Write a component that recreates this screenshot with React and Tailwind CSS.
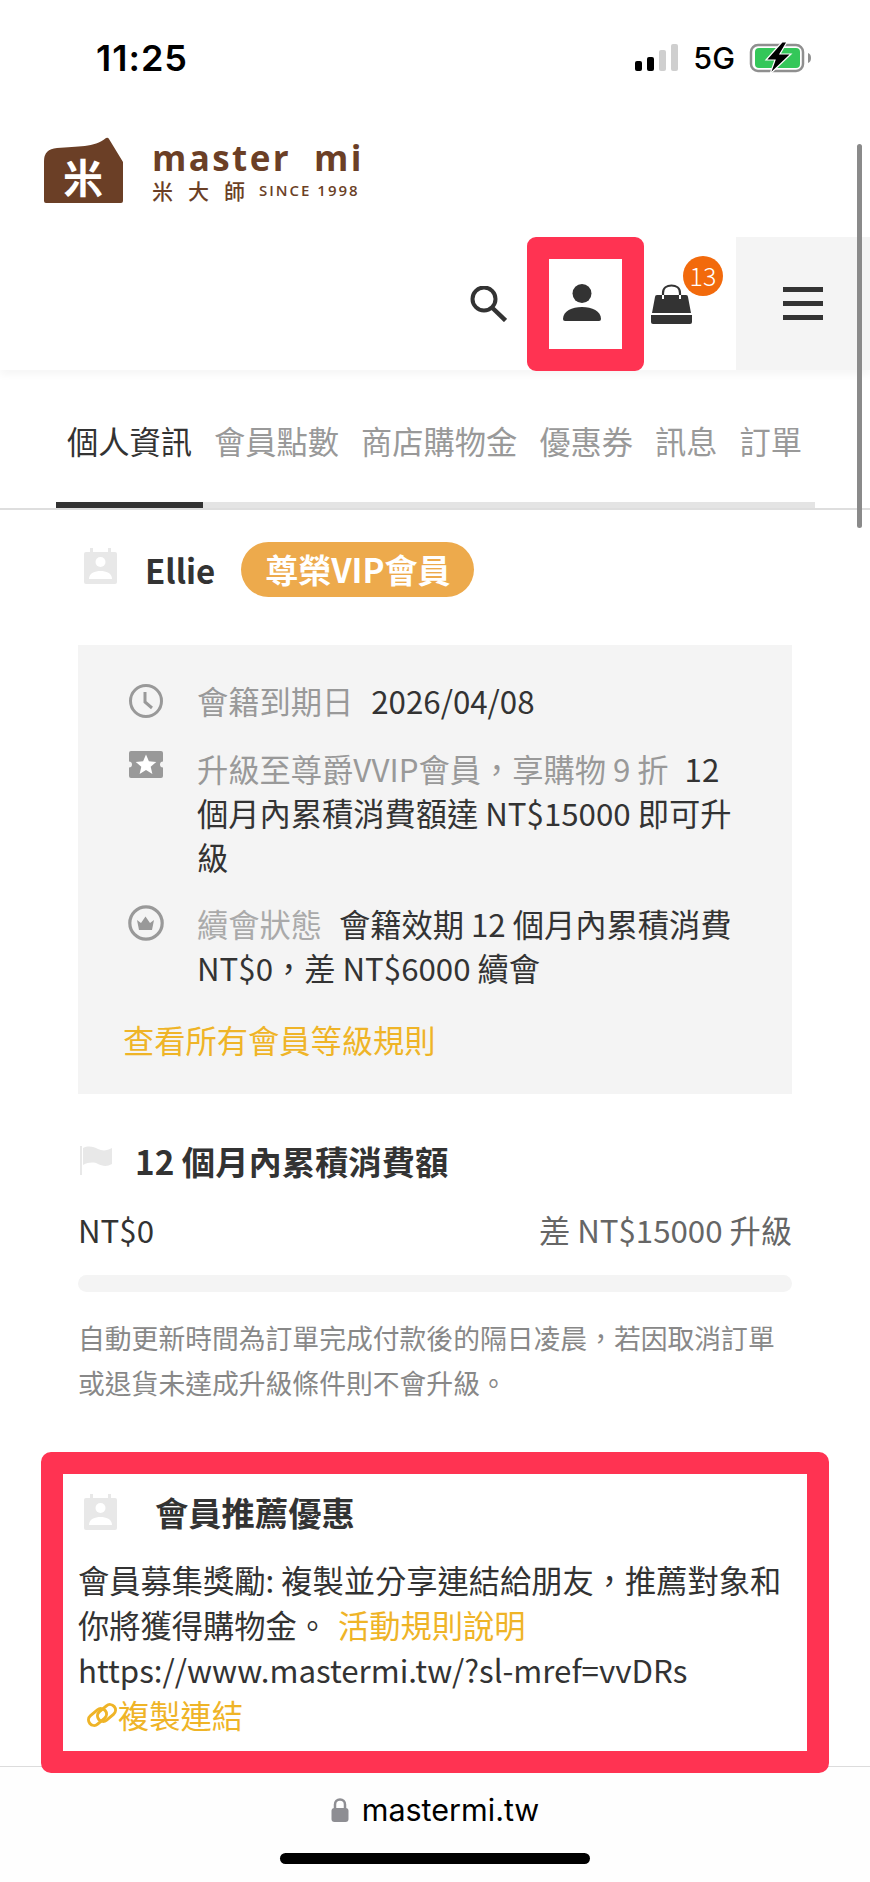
import React from "react";

const cjk = "font-['Noto_Sans_CJK_TC','Noto_Sans',sans-serif]";

function BadgeIcon({ className }) {
  return (
    <svg width="35" height="38" viewBox="0 0 35 38" className={className}>
      <path d="M7 1h3v5H7zM25 1h3v5h-3z" fill="#e8e8e8" />
      <rect x="1" y="5" width="33" height="32" rx="2" fill="#e8e8e8" />
      <circle cx="17.5" cy="15" r="5" fill="#fff" />
      <path d="M6 32c0-6 6-8 11.500-8S29 26 29 32z" fill="#fff" />
    </svg>
  );
}

function Row({ icon, children }) {
  return (
    <div className="flex pl-[50px]">
      <div className="w-[36px] shrink-0 pt-[5px]">{icon}</div>
      <div className="ml-[33px] w-[560px] text-[31.250px] leading-[44px] text-[#333]">{children}</div>
    </div>
  );
}

export default function App() {
  return (
    <div className={`relative h-[1882px] w-[870px] overflow-hidden bg-white ${cjk}`}>
      {/* status bar */}
      <div className="flex h-[117px] items-start justify-between pl-[96px]">
        <div className="mt-[38px] font-['Inter',sans-serif] text-[36px] font-semibold leading-[40px] tracking-[1px] text-black">11:25</div>
        <div className="mr-[57px] mt-[43px] flex items-start">
          <div className="mt-[1px] flex h-[27px] items-end gap-[5px]">
            <div className="h-[10px] w-[7px] rounded-[2px] bg-black" />
            <div className="h-[14px] w-[7px] rounded-[2px] bg-black" />
            <div className="h-[21px] w-[7px] rounded-[2px] bg-[#cfcfcf]" />
            <div className="h-[27px] w-[7px] rounded-[2px] bg-[#cfcfcf]" />
          </div>
          <div className="ml-[15px] font-['Inter',sans-serif] text-[30.500px] font-medium leading-[30px] text-black">5G</div>
          <svg width="64" height="32" viewBox="0 0 64 32" className="ml-[14px] -mt-[1px]">
            <rect x="2" y="3" width="52" height="26" rx="7" fill="none" stroke="#8f8f8f" strokeWidth="2.500" />
            <rect x="6" y="6" width="45" height="20" rx="4" fill="#34c759" />
            <path d="M59 11c2 .5 3 2.500 3 5s-1 4.500-3 5z" fill="#8f8f8f" />
            <path d="M33 0 L17 18 H26 L21 32 L42 12 H31 L38 0 Z" fill="#000" stroke="#fff" strokeWidth="1.200" />
          </svg>
        </div>
      </div>

      {/* logo */}
      <div className="flex h-[120px] items-start pl-[44px] pt-[20px] text-[#6b3f26]">
        <div className="relative h-[67px] w-[80px]">
          <svg width="80" height="67" viewBox="0 0 80 67">
            <path d="M0 64V24Q0 12 13 11C34 9 50 11 62 1Q64 0 65 2L79 25V64Q79 66 77 66H2Q0 66 0 64Z" fill="#6b3f26" />
          </svg>
          <span className="absolute left-[19px] top-[19px] text-[40px] font-bold leading-[40px] text-white">米</span>
        </div>
        <div className="ml-[28px]">
          <div className="mt-[6px] whitespace-nowrap font-['Open_Sans',sans-serif] text-[35px] font-bold leading-[30px] tracking-[2.400px]">master&nbsp;&nbsp;mi</div>
          <div className="mt-[4px] flex items-center whitespace-nowrap">
            <span className="text-[21px] font-medium leading-[26px] tracking-[15px]">米大師</span>
            <span className="-ml-[1px] font-['Open_Sans',sans-serif] text-[15px] font-semibold leading-[26px] tracking-[2px]">SINCE 1998</span>
          </div>
        </div>
      </div>

      {/* header icons */}
      <div className="relative flex h-[133px] items-center justify-end shadow-[0_5px_8px_rgba(0,0,0,0.04)]">
        <svg width="37" height="36" viewBox="0 0 37 36" className="mr-[20px]">
          <circle cx="14" cy="13" r="11.500" fill="none" stroke="#333" strokeWidth="4" />
          <path d="M22.500 22L35.500 34.500" stroke="#333" strokeWidth="4.500" />
        </svg>
        <div className="flex h-[134px] w-[117px] items-center justify-center rounded-[9px] border-[22px] border-[#ff3352] bg-white pb-[3px] pr-[7px]">
          <svg width="38" height="37" viewBox="0 0 38 37" className="shrink-0">
            <circle cx="19" cy="9.500" r="9.500" fill="#333" />
            <path d="M0 35C0 27 9 23 19 23S38 27 38 35Q38 37 36 37H2Q0 37 0 35Z" fill="#333" />
          </svg>
        </div>
        <div className="relative ml-[7px] mr-[44px] h-[40px] w-[41px]">
          <svg width="41" height="40" viewBox="0 0 41 40">
            <path d="M12 12V9C12 4 16 1.500 20.500 1.500S29 4 29 9V12" fill="none" stroke="#333" strokeWidth="2.200" />
            <path d="M6 11H35Q37 11 37 13L40 29H1L4 13Q4 11 6 11Z" fill="#333" />
            <path d="M12 11V15M29 11V15" stroke="#fff" strokeWidth="2" />
            <path d="M0 31H41V38Q41 40 39 40H2Q0 40 0 38Z" fill="#333" />
          </svg>
          <div className="absolute left-[32px] top-[-28px] flex h-[40px] w-[40px] items-center justify-center rounded-full bg-[#f26a0c] text-[25px] font-light leading-none text-white">13</div>
        </div>
        <div className="flex h-[133px] w-[134px] flex-col items-center justify-center gap-[9px] bg-[#f4f4f4]">
          <div className="h-[5px] w-[40px] bg-[#333]" />
          <div className="h-[5px] w-[40px] bg-[#333]" />
          <div className="h-[5px] w-[40px] bg-[#333]" />
        </div>
      </div>

      {/* tabs */}
      <div className="flex h-[132px] items-center gap-[22px] pl-[67px] pt-[10px] text-[31.250px] leading-[44px] text-[#999]">
        <span className="text-[#333]">個人資訊</span>
        <span>會員點數</span>
        <span>商店購物金</span>
        <span>優惠券</span>
        <span>訊息</span>
        <span>訂單</span>
      </div>
      <div className="ml-[56px] h-[6px] w-[759px] bg-[#e4e4e4]">
        <div className="h-[6px] w-[147px] bg-[#333]" />
      </div>
      <div className="h-[2px] bg-[#dedede]" />

      {/* name */}
      <div className="mt-[32px] flex h-[55px] items-center pl-[83px]">
        <BadgeIcon className="-mt-[7px]" />
        <span className="ml-[27px] text-[33px] font-bold leading-[44px] text-[#333]">Ellie</span>
        <span className="ml-[26px] flex h-[55px] w-[233px] items-center justify-center rounded-full bg-[#edaa4c] text-[33px] font-bold text-white">尊榮VIP會員</span>
      </div>

      {/* membership box */}
      <div className="mx-[78px] mt-[48px] flex h-[449px] flex-col bg-[#f4f4f4] pt-[34px]">
        <Row
          icon={
            <svg width="36" height="36" viewBox="0 0 36 36" className="-mt-[1px]">
              <circle cx="18" cy="18" r="15.500" fill="none" stroke="#999" strokeWidth="3" />
              <path d="M17 9V19L24 25" fill="none" stroke="#999" strokeWidth="3" />
            </svg>
          }
        >
          <span className="text-[#999]">會籍到期日</span>
          <span className="ml-[18px]">2026/04/08</span>
        </Row>
        <div className="h-[24px]" />
        <Row
          icon={
            <svg width="36" height="28" viewBox="0 0 36 28" className="-mt-[1px]">
              <path d="M3 0H33Q35 0 35 2V10.500A3 3 0 0 0 35 16.500V25Q35 27 33 27H3Q1 27 1 25V16.500A3 3 0 0 0 1 10.500V2Q1 0 3 0Z" fill="#999" />
              <path d="M18 3.500L20.900 10.300L28.300 10.900L22.700 15.700L24.400 23L18 19.100L11.600 23L13.300 15.700L7.700 10.900L15.100 10.300Z" fill="#fff" />
            </svg>
          }
        >
          <span className="text-[#999]">升級至尊爵VVIP會員，享購物 9 折</span>
          <span className="ml-[16px]">12</span>
          <div>
            個月內累積消費額達 NT$15000 即可升
            <br />
            級
          </div>
        </Row>
        <div className="h-[23px]" />
        <Row
          icon={
            <svg width="36" height="36" viewBox="0 0 36 36" className="-mt-[2px]">
              <circle cx="18" cy="18" r="16.200" fill="none" stroke="#999" strokeWidth="3.200" />
              <path d="M9 15L13 18L17.500 11.500L22 18L26 15L24 25H11Z" fill="#999" />
            </svg>
          }
        >
          <span className="text-[#aaa]">續會狀態</span>
          <span className="ml-[17px]">會籍效期 12 個月內累積消費</span>
          <div>NT$0，差 NT$6000 續會</div>
        </Row>
        <div className="ml-[45px] mt-[28px] text-[31.250px] leading-[44px] text-[#efb427]">查看所有會員等級規則</div>
      </div>

      {/* accumulated */}
      <div className="mt-[45px] flex h-[44px] items-center pl-[80px]">
        <svg width="33" height="30" viewBox="0 0 33 30" className="-mt-[2px]">
          <path d="M0 1H2V30H0Z" fill="#e8e8e8" />
          <path d="M3 3C9 0 14 2 18 4S27 6 32 3V19C27 22 22 21 18 19S9 17 3 20Z" fill="#e8e8e8" />
        </svg>
        <span className="ml-[22px] text-[33.300px] font-bold text-[#333]">12 個月內累積消費額</span>
      </div>
      <div className="mx-[78px] mt-[25px] flex justify-between text-[31.250px] leading-[44px]">
        <span className="text-[#333]">NT$0</span>
        <span className="text-[#666]">差 NT$15000 升級</span>
      </div>
      <div className="mx-[78px] mt-[23px] h-[17px] rounded-full bg-[#f4f4f4]" />
      <div className="ml-[78px] mt-[23px] w-[712px] text-[26.800px] leading-[45px] text-[#888]">
        自動更新時間為訂單完成付款後的隔日凌晨，若因取消訂單或退貨未達成升級條件則不會升級。
      </div>

      {/* referral */}
      <div className="relative z-10 ml-[41px] mt-[47px] h-[321px] w-[788px] rounded-[10px] border-[22px] border-[#ff3352] bg-white">
        <div className="mt-[18px] flex h-[40px] items-center pl-[20px]">
          <BadgeIcon />
          <span className="ml-[37px] text-[33.300px] font-bold text-[#333]">會員推薦優惠</span>
        </div>
        <div className="ml-[15px] mt-[25px] w-[725px] text-[31.250px] leading-[45px] text-[#333]">
          <div>會員募集獎勵: 複製並分享連結給朋友，推薦對象和</div>
          <div>
            你將獲得購物金。
            <span className="ml-[10px] text-[#efb427]">活動規則說明</span>
          </div>
          <div>https://www.mastermi.tw/?sl-mref=vvDRs</div>
          <div className="flex items-center pl-[8px] text-[#efb427]">
            <svg width="32" height="24" viewBox="0 0 32 24" className="shrink-0">
              <rect x="1.500" y="8.500" width="20" height="11" rx="5.500" fill="none" stroke="#efb427" strokeWidth="3" transform="rotate(-40 11.500 14)" />
              <rect x="10.500" y="4.500" width="20" height="11" rx="5.500" fill="none" stroke="#efb427" strokeWidth="3" transform="rotate(-40 20.500 10)" />
            </svg>
            <span>複製連結</span>
          </div>
        </div>
      </div>

      {/* browser bar */}
      <div className="-mt-[7px] flex h-[116px] flex-col items-center border-t border-[#dcdcdc] bg-[#fefefe]">
        <div className="mt-[28px] flex h-[30px] items-center">
          <svg width="18" height="24" viewBox="0 0 18 24">
            <path d="M4 11V6.500C4 3.500 6 1.500 9 1.500S14 3.500 14 6.500V11" fill="none" stroke="#8e8e93" strokeWidth="2.500" />
            <rect x="0.500" y="10" width="17" height="14" rx="3" fill="#8e8e93" />
          </svg>
          <span className="ml-[13px] font-['Inter',sans-serif] text-[30.500px] leading-[30px] text-black">mastermi.tw</span>
        </div>
        <div className="mt-[28px] h-[11px] w-[310px] rounded-full bg-black" />
      </div>

      {/* scrollbar */}
      <div className="absolute left-[857px] top-[144px] z-20 h-[384px] w-[5px] rounded-full bg-[#8a8a8a]" />
    </div>
  );
}
